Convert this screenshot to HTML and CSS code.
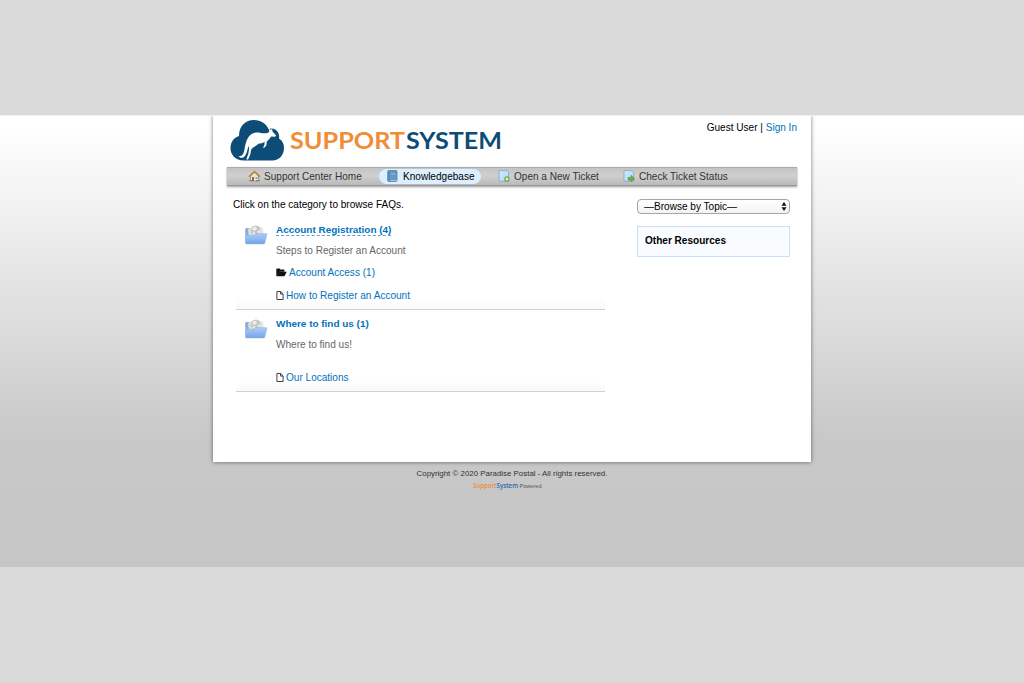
FILE: index.html
```html
<!DOCTYPE html>
<html lang="en">
<head>
<meta charset="utf-8">
<title>SupportSystem Knowledgebase</title>
<link rel="stylesheet" href="styles.css">
</head>
<body>
<svg class="defs" width="0" height="0">
  <defs>
    <linearGradient id="blue" x1="0" y1="0" x2="0" y2="1"><stop offset="0" stop-color="#a9cdfa"/><stop offset="1" stop-color="#76a4e6"/></linearGradient>
    <linearGradient id="sheet" x1="0" y1="0" x2="1" y2="1"><stop offset="0" stop-color="#d3e8fb"/><stop offset="1" stop-color="#b4d7f5"/></linearGradient>
  </defs>
  <symbol id="folder" viewBox="0 0 24 22">
    <path d="M1 5.500 2 4h4l1 2v13H2z" fill="#8badd9"/>
    <path d="M4 5 10 2l8 2 2 10H5z" fill="#dedfdd"/>
    <circle cx="12" cy="6.800" r="5.200" fill="#c5c8c4"/>
    <path d="M8 5q2-3 4-2l1 2-3 2zM13 8l3-2v4zM8 9l3-1v3z" fill="#eeeeeb"/>
    <path d="M16 3l3 1 1 7h-3z" fill="#e8e8e7"/>
    <path d="M1.400 11.400H10l2-1.700h11L20.800 19q-.2.900-1 .9H2.400q-.9 0-.9-.9z" fill="url(#blue)" stroke="#83ace6" stroke-width=".5"/>
  </symbol>
  <symbol id="page" viewBox="0 0 8 9">
    <path d="M.9.500h3.800l2.400 2.400v5.600H.9zM4.600.600v2.500H7" fill="none" stroke="#222" stroke-width=".85"/>
  </symbol>
</svg>
<div class="screen">
  <div class="container">
    <header class="header">
      <svg class="logo" width="276" height="46" viewBox="0 0 276 46">
        <path d="M14 43.500C5 43.500.5 37.500.500 31c0-6 3.500-10.500 8.500-12C9 9 15.500 3 24 3c7 0 12 3.700 14.500 9C45 9.500 50.200 15 49 21.500c3.500 2 5 5.500 5 9.500 0 7-5 12.500-11.500 12.500z" fill="#0e4c78"/>
        <path d="M8.300 39c3 1 5.200-1.500 6-5.500C15.500 25 17.500 19.500 22 16.800c4.500-2.600 8.500-.6 12.500-.5 2.200 0 3.800-.4 4.800-1.600l-.6-3.400 2.100 1.800 1.200-1.600.5 3 3.600 4-1 1.200-4-.3c-1.500 2-2.300 3.400-4.300 5l-.5 4-2.300 2.500-.9-.4 1.300-2.500.2-3.300c-2 1.400-4 1.900-6.200 2-2 2.300-5 3-6.800 5.300-1.100 1.500-.6 4-1.500 6l-2 4.500h-1.800l2.100-6c.5-3.300.9-5 .3-7.800-1.600 4.300-1.800 9-5 11.500-1.800 1.200-4.200.6-5.400-1.200z" fill="#fff"/>
        <text class="logo-text" y="32"><tspan class="orange" x="60" textLength="115" lengthAdjust="spacingAndGlyphs">SUPPORT</tspan><tspan class="navy" x="176" textLength="96" lengthAdjust="spacingAndGlyphs">SYSTEM</tspan></text>
      </svg>
      <p class="user">Guest User | <a>Sign In</a></p>
    </header>
    <nav class="nav">
      <a class="home"><svg width="13" height="12" viewBox="0 0 13 12"><path d="M2.500 6v5h8V6l-4-3.500z" fill="#eee6cf" stroke="#8a8271" stroke-width=".7"/><path d="M.8 6.700 6.500 1.500l5.700 5.200" fill="none" stroke="#b98445" stroke-width="1.500"/><path d="M4 7h2v4H4z" fill="#8d6c48"/><path d="M7.500 7h2v2h-2z" fill="#7daace"/><path d="M1 10.500h3M8 10.700h4" stroke="#719660" stroke-width="1.200"/></svg>Support Center Home</a>
      <a class="kb active"><svg width="11" height="12" viewBox="0 0 11 12"><rect x=".7" y=".5" width="9.300" height="11" rx="1" fill="#6598ca" stroke="#4777a7" stroke-width=".7"/><path d="M2 1v10" stroke="#5585b8"/><path d="M4 3h4.500v2H4z" fill="#80aad3"/><path d="M3 10.500h7" stroke="#aecbe8" stroke-width=".8"/></svg>Knowledgebase</a>
      <a class="new"><svg width="12" height="12" viewBox="0 0 12 12"><path d="M1 .6h8l1.600 1.700v8.900H1z" fill="url(#sheet)" stroke="#79a6ce" stroke-width=".8"/><circle cx="8.900" cy="9" r="2.700" fill="#63a850"/><path d="M7.300 9h3.200M8.900 7.400v3.200" stroke="#fff"/></svg>Open a New Ticket</a>
      <a class="status"><svg width="12" height="12" viewBox="0 0 12 12"><path d="M1 .6h8l1.600 1.700v8.900H1z" fill="url(#sheet)" stroke="#79a6ce" stroke-width=".8"/><path d="M5 7.300h3V5.200l3.800 3.600L8 12v-1.800H5z" fill="#65ad50" stroke="#438c3a" stroke-width=".4"/></svg>Check Ticket Status</a>
    </nav>
    <main class="content">
      <section class="main">
        <p class="intro">Click on the category to browse FAQs.</p>
        <ul class="categories">
          <li class="category first">
            <svg class="folder" width="24" height="22"><use href="#folder"/></svg>
            <div class="details">
              <h4><a class="hover">Account Registration (4)</a></h4>
              <p class="description">Steps to Register an Account</p>
              <p class="sub"><svg width="11" height="9" viewBox="0 0 11 9"><path d="M.3 8V1.300q0-.8.800-.8h2.300q.7 0 .8.900h3.500q.8 0 .8 1.100v1.200H3.600L1 8z" fill="#111"/><path d="M.7 8.200 3 4.300q.3-.6 1-.6h6.800L8.700 7.700q-.4.600-1 .6z" fill="#111"/></svg><a>Account Access (1)</a></p>
              <p class="article"><svg width="8" height="9"><use href="#page"/></svg><a>How to Register an Account</a></p>
            </div>
          </li>
          <li class="category second">
            <svg class="folder" width="24" height="22"><use href="#folder"/></svg>
            <div class="details">
              <h4><a>Where to find us (1)</a></h4>
              <p class="description">Where to find us!</p>
              <p class="article"><svg width="8" height="9"><use href="#page"/></svg><a>Our Locations</a></p>
            </div>
          </li>
        </ul>
      </section>
      <aside class="sidebar">
        <div class="select"><span>—Browse by Topic—</span><svg width="6" height="9" viewBox="0 0 6 9"><path d="M.5 3.700 3 0l2.500 3.700zM.5 5.300 3 9l2.500-3.700z" fill="#111"/></svg></div>
        <div class="resources">Other Resources</div>
      </aside>
    </main>
  </div>
  <footer class="footer">
    <p>Copyright © 2020 Paradise Postal - All rights reserved.</p>
    <svg class="powered" width="72" height="10" viewBox="0 0 72 10"><text y="7"><tspan class="brand orange" x="1" textLength="23.500" lengthAdjust="spacingAndGlyphs">Support</tspan><tspan class="brand blue" x="24.500" textLength="21.500" lengthAdjust="spacingAndGlyphs">System</tspan><tspan class="small" x="47.500" textLength="22" lengthAdjust="spacingAndGlyphs">Powered</tspan></text></svg>
  </footer>
</div>
</body>
</html>
```

FILE: styles.css
```css
* { box-sizing: border-box; }
body {
  margin: 0;
  height: 683px;
  padding-top: 115px;
  overflow: hidden;
  background: #dadada;
  color: #000;
  font: 10.05px/14px "Liberation Sans", Arial, sans-serif;
}
p, h4, ul { margin: 0; padding: 0; }
.defs { position: absolute; }
a { color: #0072bc; text-decoration: none; white-space: nowrap; }
.screen {
  height: 452px;
  overflow: hidden;
  border-top: 1px solid #eee;
  background: linear-gradient(#fff 0, #fff 12px, #c8c8c8 325px, #c6c6c6 100%);
}
.container {
  width: 598px;
  height: 346px;
  margin: 0 auto;
  padding: 0 14px;
  background: #fff;
  box-shadow: 0 0 4px rgba(0, 0, 0, .55);
}
.header { display: flex; justify-content: space-between; height: 51px; }
.logo { margin: 1px 0 0 3px; }
.logo-text { font: 700 23.500px Lato, sans-serif; }
.orange { fill: #f18c38; }
.navy { fill: #0e4c78; }
.user { padding-top: 5px; white-space: nowrap; }
.nav {
  display: flex;
  align-items: flex-start;
  height: 19px;
  border-top: 1px solid #aaa;
  border-bottom: 1px solid #999;
  background: linear-gradient(#c4c4c4, #cfcfcf 45%, #bababa);
  box-shadow: 0 1px 2px rgba(0, 0, 0, .4);
}
.nav a { display: flex; align-items: center; height: 15px; margin-top: 1px; line-height: 13px; color: #333; }
.nav svg { flex: none; margin-bottom: 1px; }
.home { width: 131px; margin-left: 21px; gap: 3px; }
.kb { width: 102px; padding-left: 8px; gap: 5px; border-radius: 8px; }
.nav .active { background: #dbefff; color: #000; }
.new { width: 125px; gap: 4px; }
.nav .new { margin-left: 17px; }
.status { gap: 4px; }
.content { display: flex; justify-content: space-between; }
.main { width: 378px; padding: 12px 0 0 6px; }
.categories { width: 369px; margin-left: 3px; padding-top: 5px; list-style: none; }
.category {
  display: flex;
  padding: 6px 0 0 8px;
  border-bottom: 1px solid #d0d0d0;
  background: linear-gradient(#fff 88%, #f9f9f9);
}
.first { height: 93px; }
.second { height: 82px; padding-top: 7px; }
.folder { margin-top: 1px; }
.details { margin-left: 8px; }
h4 { font-size: 9.950px; line-height: 14px; }
.hover { display: inline-block; height: 13px; line-height: 14px; border-bottom: 1px dashed #5aa1d2; vertical-align: top; }
.description { margin-top: 7px; color: #666; }
.sub, .article { display: flex; align-items: center; gap: 2px; }
.details p svg { margin-bottom: 1px; }
.sub { margin-top: 8px; }
.first .article { margin-top: 9px; }
.second .article { margin-top: 19px; }
.sidebar { width: 153px; margin-right: 7px; padding-top: 13px; }
.select {
  display: flex;
  align-items: center;
  justify-content: space-between;
  height: 15px;
  padding: 0 2px 0 6px;
  border: 1px solid #a6a6a6;
  border-radius: 4px;
  background: linear-gradient(#fff, #f3f3f3);
  line-height: 12px;
}
.resources {
  height: 31px;
  margin-top: 12px;
  padding: 7px;
  border: 1px solid #cbe0f3;
  background: #f8fbff;
  font-weight: bold;
}
.footer { padding-top: 7px; text-align: center; color: #333; font-size: 7.900px; line-height: 10px; }
.powered { display: block; margin: 2px auto 0; position: relative; left: -4px; }
.brand { font: 600 6.500px "Open Sans", sans-serif; }
.blue { fill: #2a66ac; }
.small { font: 5.500px "Liberation Sans", Arial, sans-serif; fill: #555; }
```
